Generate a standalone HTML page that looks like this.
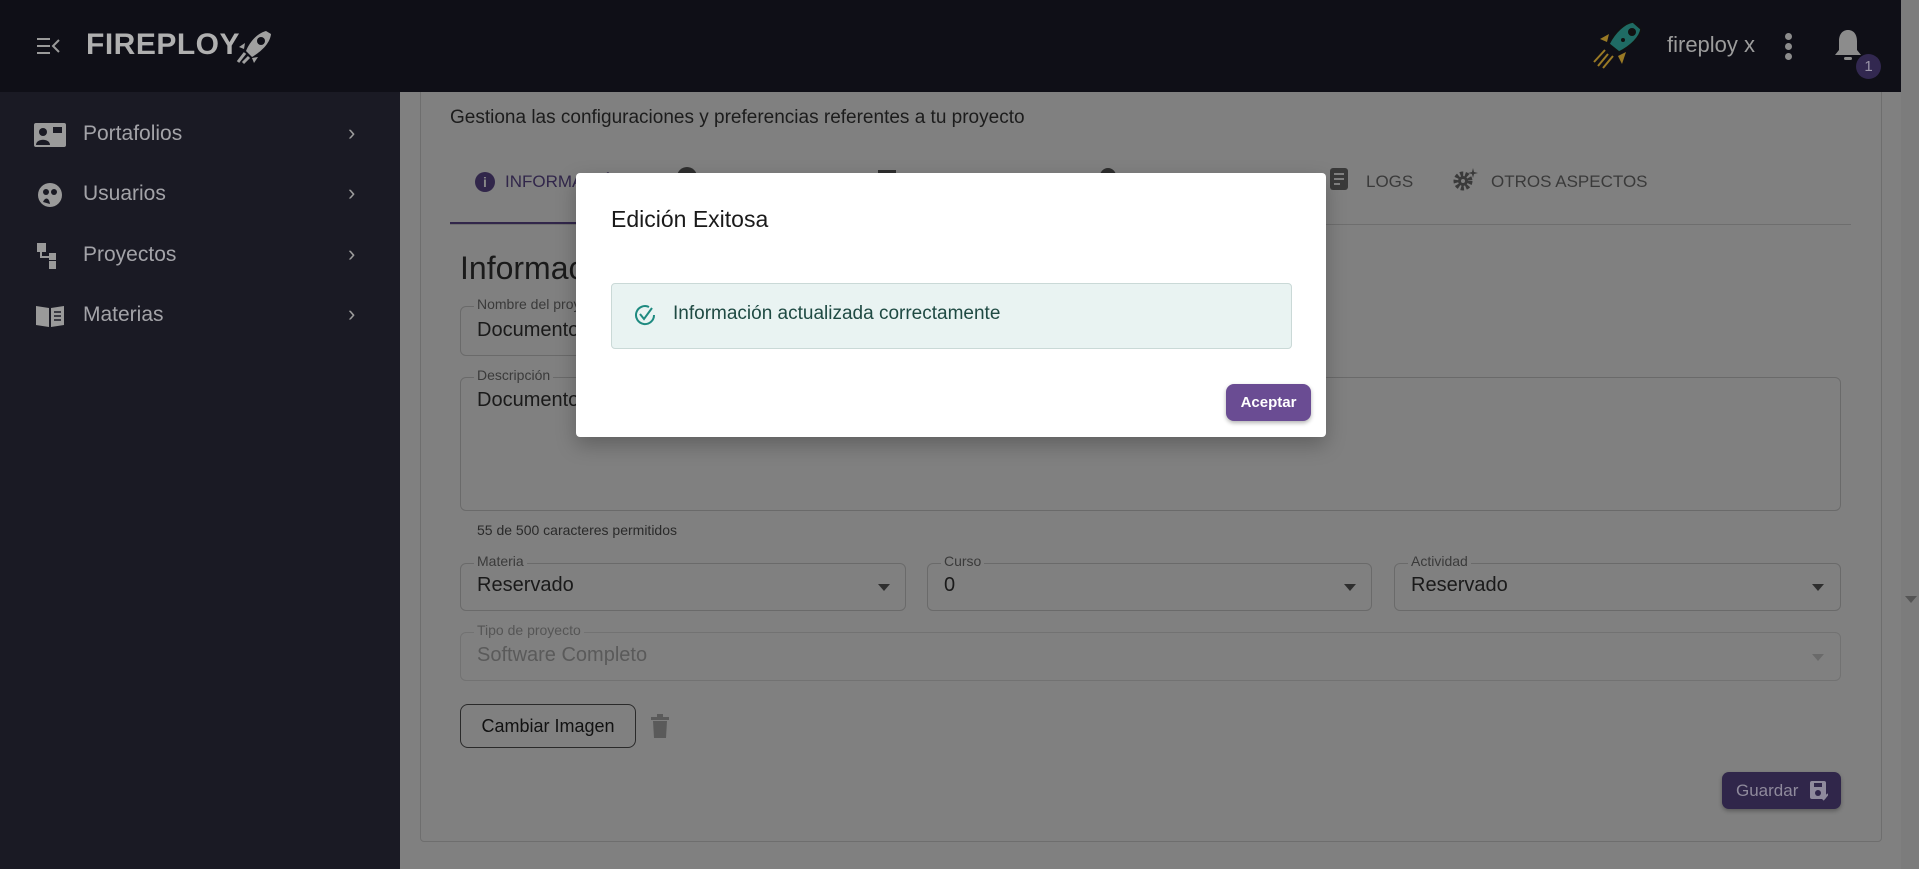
<!DOCTYPE html>
<html><head><meta charset="utf-8"><style>
*{margin:0;padding:0;box-sizing:border-box}
body{width:1919px;height:869px;overflow:hidden;background:#808080;font-family:"Liberation Sans",sans-serif;position:relative}
.a{position:absolute}
.hdr{left:0;top:0;width:1901px;height:92px;background:#0f0f17}
.side{left:0;top:92px;width:400px;height:777px;background:#1a1a24}
.si{left:83px;font-size:21px;color:#a3a3a8}
.chev{left:348px;color:#9a9a9a;font-size:22px}
.card{left:420px;top:60px;width:1462px;height:782px;border:1px solid #6e6e6e;border-radius:4px}
.fld{border:1px solid #6a6a6a;border-radius:6px}
.lbl{font-size:14px;color:#3a3a3a;background:#808080;padding:0 3px}
.val{font-size:20px;color:#1a1a1a}
.tab{font-size:17px;color:#3a3a3a;top:172px}
.arr{width:0;height:0;border-left:6px solid transparent;border-right:6px solid transparent;border-top:7px solid #2e2e2e}
</style></head><body>
<div class="a card"></div>
<div class="a hdr"></div>
<svg class="a" style="left:37px;top:37px" width="24" height="18" viewBox="0 0 24 18"><g stroke="#9a9a9a" stroke-width="2"><line x1="0" y1="2" x2="13" y2="2"/><line x1="0" y1="9" x2="13" y2="9"/><line x1="0" y1="16" x2="13" y2="16"/><polyline points="22,3 16,9 22,15" fill="none"/></g></svg>
<div class="a" style="left:86px;top:28px;font-size:30px;font-weight:bold;color:#b0b0b0;letter-spacing:0.5px">FIREPLOY</div>
<svg class="a" style="left:236px;top:29px" width="38" height="36" viewBox="0 0 38 36"><path d="M30 2 C22 4 14 12 10 22 L16 28 C26 22 34 14 35 5 Z" fill="#a0a0a0"/><circle cx="25" cy="12" r="4" fill="#0f0f17"/><path d="M9 14 L3 18 L8 20 Z M22 28 L18 34 L16 29 Z" fill="#a0a0a0"/><path d="M9 24 L2 33 M13 28 L7 34" stroke="#a0a0a0" stroke-width="3"/></svg>
<svg class="a" style="left:1589px;top:20px" width="56" height="52" viewBox="0 0 56 52"><path d="M44 2 C36 3 26 12 20 24 L30 32 C42 26 51 17 52 9 Z" fill="#1f6b64" stroke="#111" stroke-width="1.5"/><circle cx="43" cy="12" r="4" fill="#111"/><circle cx="34" cy="20" r="2" fill="#111"/><path d="M20 14 L11 19 L18 22 Z M37 32 L33 44 L29 36 Z" fill="#9a7a25"/><path d="M16 30 L5 42 M19 34 L9 46 M24 36 L14 48" stroke="#9a7a25" stroke-width="2"/></svg>
<div class="a" style="left:1667px;top:32px;font-size:22px;color:#9c9c9c">fireploy x</div>
<div class="a" style="left:1785px;top:33px;width:7px;height:7px;border-radius:50%;background:#8c8c8c;box-shadow:0 10px 0 #8c8c8c,0 20px 0 #8c8c8c"></div>
<svg class="a" style="left:1833px;top:28px" width="30" height="36" viewBox="0 0 30 36"><path d="M15 2 C9 2 6 7 6 13 L6 22 L2 27 L28 27 L24 22 L24 13 C24 7 21 2 15 2 Z" fill="#8c8c8c"/><rect x="11" y="29" width="8" height="3" rx="1.5" fill="#8c8c8c"/></svg>
<div class="a" style="left:1856px;top:54px;width:25px;height:25px;border-radius:50%;background:#322850;color:#9a95a8;font-size:15px;text-align:center;line-height:25px">1</div>
<div class="a side"></div>
<svg class="a" style="left:34px;top:123px" width="32" height="24" viewBox="0 0 32 24"><rect width="32" height="24" rx="2" fill="#9a9a9a"/><circle cx="9" cy="9" r="4" fill="#1a1a24"/><path d="M2 22 C2 15 16 15 16 22Z" fill="#1a1a24"/><rect x="19" y="4" width="9" height="6" fill="#1a1a24"/></svg>
<div class="a si" style="top:122px">Portafolios</div><div class="a chev" style="top:120px">›</div>
<svg class="a" style="left:37px;top:182px" width="26" height="26" viewBox="0 0 26 26"><circle cx="13" cy="13" r="12" fill="#9a9a9a"/><circle cx="9" cy="10" r="3" fill="#1a1a24"/><circle cx="17" cy="10" r="3" fill="#1a1a24"/><path d="M6 20 C8 15 12 15 13 22Z" fill="#1a1a24"/></svg>
<div class="a si" style="top:182px">Usuarios</div><div class="a chev" style="top:180px">›</div>
<svg class="a" style="left:37px;top:243px" width="26" height="26" viewBox="0 0 26 26"><rect x="0" y="0" width="9" height="9" fill="#9a9a9a"/><rect x="12" y="10" width="7" height="7" fill="#9a9a9a"/><rect x="12" y="18" width="7" height="8" fill="#9a9a9a"/><path d="M4 9 V14 H12" stroke="#9a9a9a" stroke-width="2" fill="none"/></svg>
<div class="a si" style="top:243px">Proyectos</div><div class="a chev" style="top:241px">›</div>
<svg class="a" style="left:35px;top:304px" width="30" height="24" viewBox="0 0 30 24"><path d="M1 2 L14 4 L14 23 L1 21Z M16 4 L29 2 L29 21 L16 23Z" fill="#9a9a9a"/><path d="M19 8 H26 M19 12 H26 M19 16 H26" stroke="#1a1a24" stroke-width="1.5"/></svg>
<div class="a si" style="top:303px">Materias</div><div class="a chev" style="top:301px">›</div>
<div class="a" style="left:1901px;top:0;width:18px;height:869px;background:#7c7c7c"></div>
<div class="a arr" style="left:1905px;top:596px;border-top-color:#555"></div>
<div class="a" style="left:450px;top:107px;font-size:19px;color:#1c1c1c">Gestiona las configuraciones y preferencias referentes a tu proyecto</div>
<div class="a" style="left:475px;top:172px;width:20px;height:20px;border-radius:50%;background:#31264a;color:#888;font-size:14px;font-weight:bold;text-align:center;line-height:20px">i</div>
<div class="a tab" style="left:505px;color:#31264a">INFORMACIÓN</div>
<div class="a" style="left:677px;top:167px;width:20px;height:20px;border-radius:50%;background:#2e2e2e"></div>
<div class="a" style="left:878px;top:170px;width:18px;height:20px;background:#2e2e2e"></div>
<div class="a" style="left:1100px;top:168px;width:16px;height:16px;border-radius:50%;background:#2e2e2e"></div>
<div class="a" style="left:450px;top:222px;width:250px;height:3px;background:#31264a"></div>
<div class="a" style="left:450px;top:224px;width:1401px;height:1px;background:#6e6e6e"></div>
<svg class="a" style="left:1330px;top:168px" width="18" height="22" viewBox="0 0 18 22"><rect width="18" height="22" rx="3" fill="#3a3a3a"/><path d="M4 6H14M4 11H14M4 16H10" stroke="#808080" stroke-width="2"/></svg>
<div class="a tab" style="left:1366px">LOGS</div>
<svg class="a" style="left:1452px;top:167px" width="26" height="24" viewBox="0 0 26 24"><circle cx="11" cy="14" r="7" fill="none" stroke="#3a3a3a" stroke-width="5" stroke-dasharray="3 2"/><circle cx="11" cy="14" r="5" fill="#3a3a3a"/><circle cx="11" cy="14" r="2" fill="#808080"/><path d="M21 1 L22 5 L26 6 L22 7 L21 11 L20 7 L16 6 L20 5Z" fill="#3a3a3a"/></svg>
<div class="a tab" style="left:1491px">OTROS ASPECTOS</div>
<div class="a" style="left:460px;top:250px;font-size:32px;color:#1a1a1a">Información</div>
<div class="a fld" style="left:460px;top:306px;width:800px;height:50px"></div>
<div class="a lbl" style="left:474px;top:296px">Nombre del proyecto</div>
<div class="a val" style="left:477px;top:319px">Documento</div>
<div class="a fld" style="left:460px;top:377px;width:1381px;height:134px"></div>
<div class="a lbl" style="left:474px;top:367px">Descripción</div>
<div class="a val" style="left:477px;top:389px">Documento</div>
<div class="a" style="left:477px;top:522px;font-size:14px;color:#2a2a2a">55 de 500 caracteres permitidos</div>
<div class="a fld" style="left:460px;top:563px;width:446px;height:48px"></div>
<div class="a lbl" style="left:474px;top:553px">Materia</div>
<div class="a val" style="left:477px;top:574px">Reservado</div><div class="a arr" style="left:878px;top:584px"></div>
<div class="a fld" style="left:927px;top:563px;width:445px;height:48px"></div>
<div class="a lbl" style="left:941px;top:553px">Curso</div>
<div class="a val" style="left:944px;top:574px">0</div><div class="a arr" style="left:1344px;top:584px"></div>
<div class="a fld" style="left:1394px;top:563px;width:447px;height:48px"></div>
<div class="a lbl" style="left:1408px;top:553px">Actividad</div>
<div class="a val" style="left:1411px;top:574px">Reservado</div><div class="a arr" style="left:1812px;top:584px"></div>
<div class="a fld" style="left:460px;top:632px;width:1381px;height:49px;border-color:#727272"></div>
<div class="a lbl" style="left:474px;top:622px;color:#555">Tipo de proyecto</div>
<div class="a val" style="left:477px;top:644px;color:#5a5a5a">Software Completo</div><div class="a arr" style="left:1812px;top:654px;border-top-color:#6a6a6a"></div>
<div class="a" style="left:460px;top:704px;width:176px;height:44px;border:1px solid #2a2a2a;border-radius:8px;font-size:18px;color:#111;text-align:center;line-height:42px">Cambiar Imagen</div>
<svg class="a" style="left:651px;top:714px" width="18" height="24" viewBox="0 0 18 24"><rect x="0" y="3" width="18" height="3" fill="#5a5a5a"/><rect x="6" y="0" width="6" height="3" fill="#5a5a5a"/><path d="M2 7H16L15 24H3Z" fill="#5a5a5a"/></svg>
<div class="a" style="left:1722px;top:772px;width:119px;height:37px;background:#30264a;border-radius:7px;box-shadow:0 2px 4px rgba(0,0,0,.3);color:#8f8a9c;font-size:17px;line-height:37px;padding-left:14px">Guardar</div>
<svg class="a" style="left:1810px;top:781px" width="18" height="20" viewBox="0 0 18 20"><rect width="16" height="18" rx="2" fill="#8f8a9c"/><rect x="4" y="2" width="8" height="4" fill="#30264a"/><circle cx="8" cy="12" r="3" fill="#30264a"/><path d="M13 19 L18 13" stroke="#8f8a9c" stroke-width="2"/></svg>
<div class="a" style="left:576px;top:173px;width:750px;height:264px;background:#fff;border-radius:4px;box-shadow:0 8px 20px rgba(0,0,0,.25)"></div>
<div class="a" style="left:611px;top:206px;font-size:23px;color:#1a1a1a">Edición Exitosa</div>
<div class="a" style="left:611px;top:283px;width:681px;height:66px;background:#e9f3f2;border:1px solid #cad9d7;border-radius:4px"></div>
<svg class="a" style="left:633px;top:303px" width="24" height="24" viewBox="0 0 24 24"><path d="M21 12 A9 9 0 1 1 16 4" fill="none" stroke="#1e8a80" stroke-width="2"/><polyline points="7,11 11,16 19,5" fill="none" stroke="#1e8a80" stroke-width="2"/></svg>
<div class="a" style="left:673px;top:303px;font-size:19px;color:#1f4a43">Información actualizada correctamente</div>
<div class="a" style="left:1226px;top:384px;width:85px;height:37px;background:#6a4c93;border-radius:8px;box-shadow:0 2px 4px rgba(0,0,0,.3);color:#fff;font-size:15px;font-weight:bold;text-align:center;line-height:37px">Aceptar</div>
</body></html>
